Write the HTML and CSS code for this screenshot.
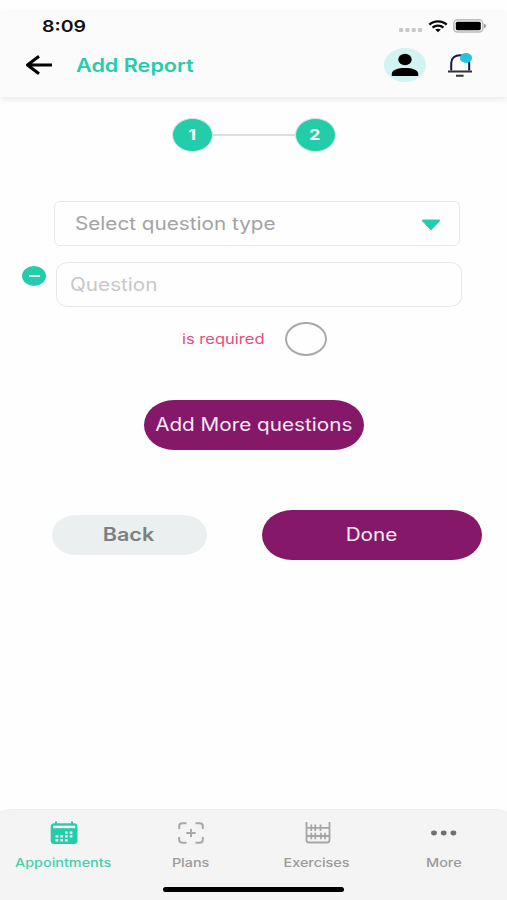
FILE: index.html
```html
<!DOCTYPE html>
<html lang="en">
<head>
<meta charset="utf-8">
<title>Add Report</title>
<link rel="stylesheet" href="styles.css">
</head>
<body>
<div class="screen">
  <header class="header">
    <div class="status">
      <span class="wide time">8:09</span>
      <div class="indicators">
        <svg class="signal" width="24" height="4" viewBox="0 0 24 4" fill="#c9c9c9"><rect width="4.2" height="4" rx="1"/><rect x="6.3" width="4.2" height="4" rx="1"/><rect x="12.6" width="4.2" height="4" rx="1"/><rect x="18.9" width="4.2" height="4" rx="1"/></svg>
        <svg class="wifi" width="20" height="13" viewBox="0 0 20 13" fill="none" stroke="#080808" stroke-width="2.3"><path d="M1.3 4.6C6 .2 14 .2 18.7 4.6"/><path d="M4.5 7.6c3.1-2.7 7.9-2.7 11 0"/><path d="M7.2 9.6c1.6-1.3 4-1.3 5.6 0L10 12.3z" fill="#080808" stroke="none"/></svg>
        <svg class="battery" width="33" height="14" viewBox="0 0 33 14"><rect x=".8" y=".8" width="29" height="12.2" rx="3.8" fill="#fafafa" stroke="#bcbcbc" stroke-width="1.5"/><rect x="2.8" y="2.7" width="25" height="8.5" rx="1.6"/><path d="M31 4.8q2 .5 2 2.2t-2 2.2z" fill="#999"/></svg>
      </div>
    </div>
    <div class="toolbar">
      <svg class="back-arrow" width="28" height="20" viewBox="0 0 28 20" fill="none" stroke="#000" stroke-width="3" stroke-linejoin="round"><path d="M2.500 10H27M14 1.200L2.500 10 14 18.800"/></svg>
      <h1 class="wide title">Add Report</h1>
      <div class="avatar">
        <svg width="28" height="24" viewBox="0 0 28 24"><ellipse cx="14" cy="6.5" rx="6.7" ry="5.8"/><path d="M.8 23v-2.2C.8 16.8 7 15 14 15s13.200 1.800 13.200 5.800V23z"/></svg>
      </div>
      <svg class="bell" width="26" height="26" viewBox="0 0 26 26" fill="none"><path d="M4.200 18.500V11C4.200 6.300 8 3.200 13 3.200s9.200 3.100 9.200 7.800v7.500" stroke="#16184a" stroke-width="2"/><path d="M1 19.500h24M9 23.700h7.600" stroke="#333" stroke-width="2"/><ellipse cx="19" cy="6" rx="6.100" ry="5" fill="#27c3dd"/></svg>
    </div>
  </header>

  <main class="content">
    <div class="steps">
      <span class="step"><b class="wide">1</b></span>
      <span class="line"></span>
      <span class="step"><b class="wide">2</b></span>
    </div>

    <div class="select">
      <span class="wide select-text">Select question type</span>
      <svg width="20" height="12" viewBox="0 0 20 12"><path d="M2 1.500h16L10 10z" fill="#24cdaa" stroke="#24cdaa" stroke-width="2" stroke-linejoin="round"/></svg>
    </div>

    <div class="question-row">
      <span class="remove"><i></i></span>
      <div class="input"><span class="wide placeholder">Question</span></div>
    </div>

    <div class="required">
      <span class="wide required-text">is required</span>
      <span class="radio"></span>
    </div>

    <div class="button add"><span class="wide add-text">Add More questions</span></div>

    <div class="actions">
      <div class="button back"><span class="wide back-text">Back</span></div>
      <div class="button done"><span class="wide done-text">Done</span></div>
    </div>
  </main>

  <footer class="footer">
    <nav class="tabs">
      <div class="tab active">
        <svg width="28" height="24" viewBox="0 0 28 24"><rect x=".7" y="2.200" width="26.800" height="20.800" rx="3.500" fill="#24cdaa"/><path d="M6 .5v3M22 .5v3" stroke="#24cdaa" stroke-width="2"/><path d="M3 4.700h22.200v2.500H3z" fill="#f4f4f4"/><path d="M15 10.500h2.700v2.300H15zm4.700 0h2.700v2.300h-2.700zM5.600 14.300h2.700v2.300H5.600zm4.700 0H13v2.300h-2.700zm4.700 0h2.700v2.300H15zm4.700 0h2.700v2.300h-2.700zM5.600 18.100h2.700v2.300H5.600zm4.700 0H13v2.300h-2.700zm4.700 0h2.700v2.300H15z" fill="#f4f4f4"/></svg>
        <span class="wide">Appointments</span>
      </div>
      <div class="tab plans">
        <svg width="26" height="22" viewBox="0 0 26 22" fill="none" stroke="#a8a8a8" stroke-width="2"><path d="M1.200 7V4q0-2.700 3.300-2.700h4M17.500 1.300h4q3.300 0 3.300 2.700v3M24.800 15v3q0 2.700-3.300 2.700h-4M8.500 20.700h-4q-3.300 0-3.300-2.700v-3"/><path d="M13 7v8M8.300 11h9.400"/></svg>
        <span class="wide">Plans</span>
      </div>
      <div class="tab exercises">
        <svg width="26" height="22" viewBox="0 0 26 22" fill="none" stroke="#a5a5a5" stroke-width="1.800"><path d="M1.500 0v18q0 2.500 2.700 2.500h17.600q2.700 0 2.700-2.500V0M1.500 5.800h23M1.500 14h23"/><path d="M6.300 2.500v6.600M10.300 2.500v6.600M15.500 2.500v6.600M6.300 10.700v6.600M10.300 10.700v6.600M16 10.700v6.600M20 10.700v6.600"/></svg>
        <span class="wide">Exercises</span>
      </div>
      <div class="tab">
        <svg width="26" height="22" viewBox="0 0 26 22" fill="#707070"><ellipse cx="3" cy="11" rx="2.900" ry="2.400"/><ellipse cx="12.700" cy="11" rx="2.900" ry="2.400"/><ellipse cx="22.400" cy="11" rx="2.900" ry="2.400"/></svg>
        <span class="wide">More</span>
      </div>
    </nav>
    <div class="home"></div>
  </footer>
</div>
</body>
</html>
```

FILE: styles.css
```css
* { box-sizing: border-box; }
body { margin: 0; background: #fefefe; font-family: Inter, "Liberation Sans", sans-serif; }
.screen { width: 507px; height: 900px; padding-top: 12px; display: flex; flex-direction: column; overflow: hidden; }

/* Glyphs are drawn wider than the font's own proportions. */
.wide { display: inline-block; white-space: nowrap; transform: scaleX(1.2); }

.header { height: 85px; background: #fbfbfb; box-shadow: 0 2px 6px rgba(0, 0, 0, .09); }
.status { height: 28px; padding: 0 21px 0 42px; display: flex; align-items: center; justify-content: space-between; }
.time { font-size: 16px; font-weight: 600; color: #111; transform-origin: left; transform: scaleX(1.22); }
.indicators { display: flex; align-items: center; }
.signal { margin: 8px 5px 0 0; }
.wifi { margin-right: 5px; }
.toolbar { height: 50px; padding: 0 34px 0 25px; display: flex; align-items: center; }
.title { margin: 0 auto 0 23px; font-size: 18px; font-weight: 600; color: #24cdaa; transform-origin: left; }
.avatar { width: 42px; height: 34px; border-radius: 50%; background: #d2f3f2; display: flex; align-items: center; justify-content: center; margin-right: 21px; }

.content { flex: 1; }
.steps { margin-top: 21px; height: 34px; display: flex; align-items: center; justify-content: center; }
.step { width: 41px; height: 34px; border: 1.5px solid #d3e6e1; border-radius: 50%; background: #24cdaa; color: #fff; font-size: 15px; display: flex; align-items: center; justify-content: center; }
.step .wide { margin-top: -1px; }
.line { width: 82px; height: 2px; background: #dedede; }

.select { margin: 49px 47px 0 54px; height: 45px; padding: 0 18px 0 20px; border: 1.5px solid #e7e7e7; border-radius: 6px; display: flex; align-items: center; justify-content: space-between; }
.select svg { margin-top: 3px; }
.select-text { font-size: 18px; color: #a3a3a3; transform-origin: left; transform: scaleX(1.15); }
.question-row { margin-top: 16px; padding: 0 45px 0 22px; display: flex; }
.remove { width: 24px; height: 20px; margin: 4px 10px 0 0; border-radius: 50%; background: #24cdaa; display: flex; align-items: center; justify-content: center; }
.remove i { width: 11px; height: 2px; background: #e4fff8; }
.input { flex: 1; height: 45px; padding-left: 13px; border: 1.5px solid #e9e9e9; border-radius: 12px / 10px; display: flex; align-items: center; }
.placeholder { font-size: 18px; color: #c8c8c8; transform-origin: left; transform: scaleX(1.15); }
.required { margin-top: 15px; padding-left: 182px; height: 34px; display: flex; align-items: center; }
.required-text { width: 83px; margin-top: -2px; font-size: 14px; color: #e94b7c; transform-origin: left; transform: scaleX(1.18); }
.radio { width: 42px; height: 34px; margin-left: 20px; border: 2px solid #aaa; border-radius: 50%; }

.button { display: flex; align-items: center; justify-content: center; border-radius: 30px / 25px; }
.add, .done { width: 220px; height: 50px; background: #86186a; color: #f8eaf5; font-size: 18px; }
.add { margin: 43.5px 0 0 144px; }
.add-text, .done-text { transform: scaleX(1.15); }
.done-text { margin-right: 2px; }
.actions { margin-top: 60px; padding: 0 25px 0 52px; display: flex; align-items: center; justify-content: space-between; }
.back { width: 155px; height: 40px; background: #ebefef; color: #7c8080; font-size: 18px; font-weight: 600; }
.back-text { margin-right: 2px; }

.footer { height: 91px; background: #f4f4f4; border-top: 1px solid #eee; border-radius: 14px 14px 0 0 / 3px; }
.tabs { display: grid; grid-template-columns: repeat(4, 1fr); height: 77px; padding-top: 11px; }
.tab { display: flex; flex-direction: column; align-items: center; gap: 10px; color: #9b9b9b; font-size: 12px; font-weight: 500; line-height: 16px; }
.tab svg { height: 24px; }
.active svg, .plans svg, .exercises svg { margin-left: 2px; }
.active { color: #45cfaf; }
.home { width: 181px; height: 5px; margin-left: 163px; border-radius: 3px; background: #000; }
```
